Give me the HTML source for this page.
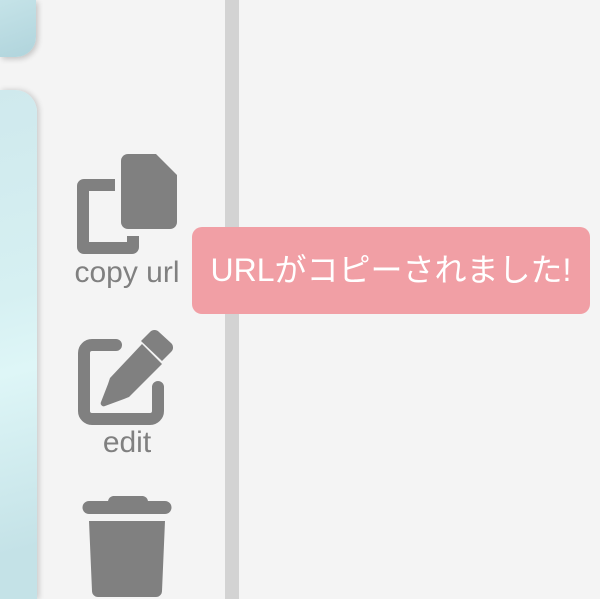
<!DOCTYPE html>
<html style="margin:0;height:599px;overflow:hidden"><head><style>
body{margin:0;width:600px;height:599px;background:#f4f4f4;position:relative;overflow:hidden;font-family:"Liberation Sans","Noto Sans CJK JP",sans-serif}
.c1{position:absolute;left:0;top:0;width:36px;height:57px;border-radius:0 0 20px 0;background:linear-gradient(160deg,#c5e3e8,#b0d4dc);box-shadow:2px 2px 6px rgba(0,0,0,.2)}
.c2{position:absolute;left:0;top:90px;width:37px;height:509px;border-radius:0 22px 0 0;background:linear-gradient(165deg,#cfe9ed 0%,#d6f0f2 40%,#def6f7 55%,#c4e2e7 90%);box-shadow:2px 0 6px rgba(0,0,0,.18)}
.bar{position:absolute;left:225px;top:0;width:14px;height:599px;background:#d3d3d3}
.lbl{position:absolute;color:#808080;font-size:30px;text-align:center;line-height:32px}
.toast{position:absolute;left:192px;top:227px;width:398px;height:87px;background:#f19fa5;border-radius:10px;color:#fff;font-size:32px;line-height:87px;text-align:center}
</style></head><body>
<div class="c1"></div><div class="c2"></div><div class="bar"></div>
<svg style="position:absolute;left:0;top:0" width="600" height="599">
<g fill="#808080">
<path d="M115 179H84a7 7 0 0 0-7 7v61a7 7 0 0 0 7 7h48a7 7 0 0 0 7-7v-11h-12v6H89V191h26z"/>
<path d="M128 154h28l21 21v47a7 7 0 0 1-7 7h-42a7 7 0 0 1-7-7V161a7 7 0 0 1 7-7z"/>
</g>
<path d="M116 345H92a8 8 0 0 0-8 8v58a8 8 0 0 0 8 8h58a8 8 0 0 0 8-8v-24" fill="none" stroke="#808080" stroke-width="12" stroke-linecap="round"/>
<path d="M150 332a6 6 0 0 1 9 0l12 11a6 6 0 0 1 0 9l-9 9-21-20zM142 344l20 20-33 33-5 2-19 7a3 3 0 0 1-4-4l7-18 2-6z" fill="#808080"/>
<g fill="#808080">
<path d="M113 496h30a6 6 0 0 1 5 5h17a6 6 0 0 1 0 13H89a6 6 0 0 1 0-13h19a6 6 0 0 1 5-5z"/>
<path d="M89 521h76l-3 70a6 6 0 0 1-6 6H98a6 6 0 0 1-6-6z"/>
</g>
</svg>
<div class="lbl" style="left:57px;top:257px;width:140px">copy url</div>
<div class="lbl" style="left:57px;top:427px;width:140px">edit</div>
<div class="toast">URLがコピーされました!</div>
</body></html>
